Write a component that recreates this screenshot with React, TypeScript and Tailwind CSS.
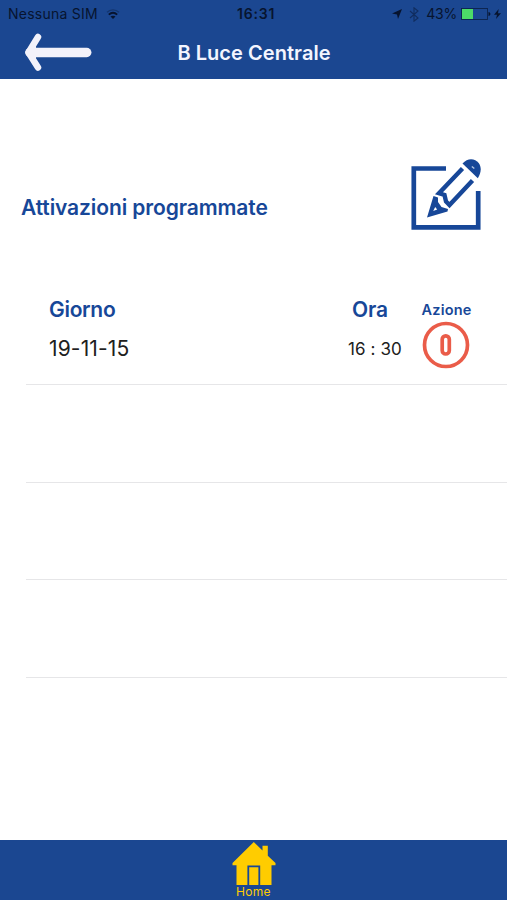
import React from "react";

interface Activation {
  id: string;
  day: string;
  time: string;
}

const activations: Activation[] = [{ id: "a1", day: "19-11-15", time: "16 : 30" }];
const emptyRows = ["e1", "e2", "e3"];

function StatusBar() {
  return (
    <div className="relative flex h-7 items-center justify-between pl-2 pr-[6px] text-[14px] leading-7 text-[#07142f]">
      <div className="flex items-center gap-2">
        <span className="tracking-[0.25px]">Nessuna SIM</span>
        <svg className="-mt-px h-[10px] w-[14px]" viewBox="0 0 14 10" fill="none" stroke="currentColor">
          <path d="M1 3.2C4.4 0 9.6 0 13 3.2" strokeWidth="1.3" opacity=".35" />
          <path d="M2.8 5.6C5.3 3.4 8.7 3.4 11.2 5.6" strokeWidth="1.9" />
          <path d="M7 10 4.5 7.4C6 6.4 8 6.4 9.5 7.4Z" fill="currentColor" stroke="none" />
        </svg>
      </div>
      <span className="absolute left-[237px] top-0 font-semibold tracking-[0.8px]">16:31</span>
      <div className="flex items-center">
        <svg className="mr-[7px] -mt-px h-[10px] w-[10px]" viewBox="0 0 10 10" fill="currentColor">
          <path d="M10 0 6 10 5 5.4 0 4.6Z" />
        </svg>
        <svg className="mr-[7px] h-[15px] w-[10px] opacity-50" viewBox="0 0 10 15" fill="none" stroke="currentColor" strokeWidth="1.1">
          <path d="m1 4 8 7-4 3.2V.8L9 4l-8 7" />
        </svg>
        <span className="mr-1 tracking-[-0.2px]">43%</span>
        <svg className="mr-[3px] -mt-px h-3 w-[30px]" viewBox="0 0 30 12">
          <rect x=".5" y=".5" width="26" height="11" fill="none" stroke="currentColor" strokeWidth=".9" opacity=".7" />
          <rect x="1" y="1" width="11" height="10" fill="#4cdb68" />
          <path d="M27.5 4c2.5.5 2.5 3.5 0 4Z" fill="currentColor" />
        </svg>
        <svg className="-mt-px h-[10px] w-[7px]" viewBox="0 0 7 10" fill="currentColor">
          <path d="M4.7 0 0 5.7h3L2 10l5-5.8H4Z" />
        </svg>
      </div>
    </div>
  );
}

function PencilIcon() {
  return (
    <svg className="h-[72px] w-[70px]" viewBox="0 0 70 72" fill="none" stroke="#174798" strokeWidth="4.700">
      <path d="M35 10.5H2.800V69.300H67.200V33" />
      {/* pencil body */}
      <path d="M51.500 10.500 28 35.300l5.500 1.700 1.500 6.500 3.500 3.500L61.500 22.500" strokeWidth="4.400" />
      {/* tip */}
      <path d="m22.500 38 4.500 1.500v4.500l3.500 5 6.500 2-.5 2.500L16 59.500ZM24.200 49l-2 4 4-1.500Z" fillRule="evenodd" fill="#174798" stroke="none" />
      {/* eraser */}
      <path d="M51.500 5.500C56.500-.5 64 0 67.700 5c3.200 4.500 2.300 10-.9 15.200Z" fill="#174798" stroke="none" />
      <path d="m60.800 8.500 2.500 2" stroke="#b7c7e2" strokeWidth="1.400" />
    </svg>
  );
}

function OffIcon() {
  return (
    <svg className="h-[48px] w-[48px]" viewBox="0 0 48 48" fill="none" stroke="#ea5c49">
      <circle cx="24" cy="24" r="21.500" strokeWidth="3.700" />
      <rect x="20.200" y="14.800" width="7.100" height="18.200" rx="3.500" strokeWidth="3.700" />
    </svg>
  );
}

function HouseIcon() {
  return (
    <svg className="h-[44px] w-[44px]" viewBox="0 0 44 44" fill="#ffcc00">
      <path d="M21.800 0 30.500 8.500V3.700h5.300v10L43.500 21v2.200H39.500V43H4.500V23.200H.5V21Z" />
      <path d="M16.300 43V24.300H27.300V43" fill="none" stroke="#174798" strokeWidth="1.800" />
    </svg>
  );
}

export default function App() {
  return (
    <div className="flex h-[900px] w-full flex-col overflow-hidden bg-white font-[Inter,sans-serif] text-[#174798]">
      <header className="h-[79px] bg-[#1b4791]">
        <StatusBar />
        <div className="grid h-[49px] grid-cols-[1fr_auto_1fr] items-center">
          <button className="ml-[25px] w-[67px]" aria-label="Indietro">
            <svg className="-mt-[2px] h-[38px] w-[67px]" viewBox="0 0 67 38" fill="none" stroke="#f3f2fa" strokeLinecap="round" strokeLinejoin="round">
              <path d="M5 19.500H61.700" strokeWidth="9.500" />
              <path d="M13 4 3.500 19.500 13 34.500" strokeWidth="6.500" />
              <path d="m11 12-5 7.500 5 7.500Z" fill="#f3f2fa" stroke="none" />
            </svg>
          </button>
          <h1 className="pl-px text-[20px] font-semibold tracking-[0.05px] text-[#f3f5ff]">B Luce Centrale</h1>
        </div>
      </header>

      <main className="flex-1">
        <div className="flex items-start justify-between pl-[21px] pr-[26px] pt-[79px]">
          <h2 className="mt-[36px] text-[21px] font-semibold leading-7 tracking-[-0.1px]">Attivazioni programmate</h2>
          <button aria-label="Modifica">
            <PencilIcon />
          </button>
        </div>

        <div className="mt-[64px] grid h-7 grid-cols-[303px_62px_1fr] items-center pl-[49px]">
          <span className="text-[21px] font-semibold tracking-[-0.3px]">Giorno</span>
          <span className="text-[21px] font-semibold tracking-[-0.2px]">Ora</span>
          <span className="pl-[7.500px] text-[14.500px] font-semibold tracking-[0.2px]">Azione</span>
        </div>

        {activations.map((item) => (
          <div key={item.id} className="ml-[26px] grid h-[63px] grid-cols-[299px_71px_1fr] items-start border-b border-[#e6e6e8] pl-[23px] text-[#202020]">
            <span className="pt-[13px] text-[21px] leading-7 tracking-[0.15px]">{item.day}</span>
            <span className="pt-[13px] text-[17px] leading-7 tracking-[0.1px]">{item.time}</span>
            <div className="-mt-px pl-[3px]">
              <OffIcon />
            </div>
          </div>
        ))}
        {emptyRows.map((id) => (
          <div key={id} className="ml-[26px] h-[97.700px] border-b border-[#e6e6e8]" />
        ))}
      </main>

      <footer className="flex h-[60px] flex-col items-center bg-[#1b4791] pt-[2px] text-[#ffcc00]">
        <HouseIcon />
        <span className="text-[12px] leading-[12px] tracking-[0.3px]">Home</span>
      </footer>
    </div>
  );
}
